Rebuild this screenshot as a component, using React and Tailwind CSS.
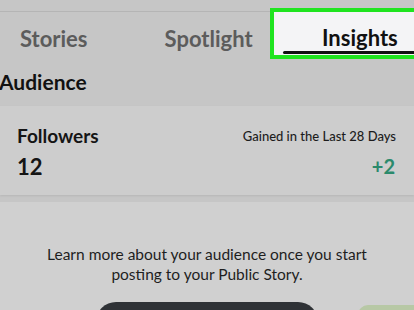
export default function App() {
    return (
        <div className="relative h-[310px] w-[414px] overflow-hidden bg-[#c6c6c6] font-['Lato',sans-serif]">
            {/* status strip */}
            <div className="h-[12px] border-b border-[#b5b5b5]" />

            {/* Tabs */}
            <div className="flex h-[50px] items-center text-[22px] font-bold">
                <div className="flex w-[270px] items-center pt-[3px]">
                    <span className="ml-[20px] text-[#5c5c5c]">Stories</span>
                    <span className="ml-[77px] text-[#5c5c5c]">Spotlight</span>
                </div>
            </div>

            {/* Highlighted Insights tab */}
            <div className="absolute left-[270px] top-[8px] flex h-[51px] w-[150px] items-center border-4 border-[#1fe41f] bg-[#f4f4f6]">
                <span className="ml-[48px] mt-[8px] text-[22px] font-bold text-[#111]">Insights</span>
                <div className="absolute bottom-[1px] left-[9px] right-0 h-[3px] rounded-l bg-[#111]" />
            </div>

            {/* Audience */}
            <div className="-ml-[1px] mt-[9px] text-[21px] font-bold leading-none text-[#111]">Audience</div>

            {/* Followers card */}
            <div className="mt-[14px] h-[89px] bg-[#cdcdcd] px-[17px] pt-[16px] shadow-[0_1px_2px_rgba(0,0,0,0.08)]">
                <div className="flex items-center justify-between">
                    <span className="text-[19px] font-bold text-[#151515]">Followers</span>
                    <span className="mr-[1px] text-[13px] font-medium text-[#1c1c1c]">Gained in the Last 28 Days</span>
                </div>
                <div className="-mt-[1px] flex items-center justify-between">
                    <span className="text-[22px] font-bold text-[#151515]">12</span>
                    <span className="mr-[2px] text-[20px] font-bold text-[#2b8a6c]">+2</span>
                </div>
            </div>

            {/* Empty state card */}
            <div className="mt-[7px] h-[120px] bg-[#d0d0d0] pt-[42px] text-center">
                <p className="text-[15.5px] leading-[20px] text-[#1e1e1e]">
                    Learn more about your audience once you start
                    <br />
                    posting to your Public Story.
                </p>
                <div className="mx-auto mt-[18px] h-[40px] w-[222px] rounded-full bg-[#2f3236]" />
            </div>

            {/* green callout edge */}
            <div className="absolute left-[358px] top-[305px] h-[20px] w-[70px] rounded-tl-[10px] bg-[#b7c8a5]" />
        </div>
    );
}
